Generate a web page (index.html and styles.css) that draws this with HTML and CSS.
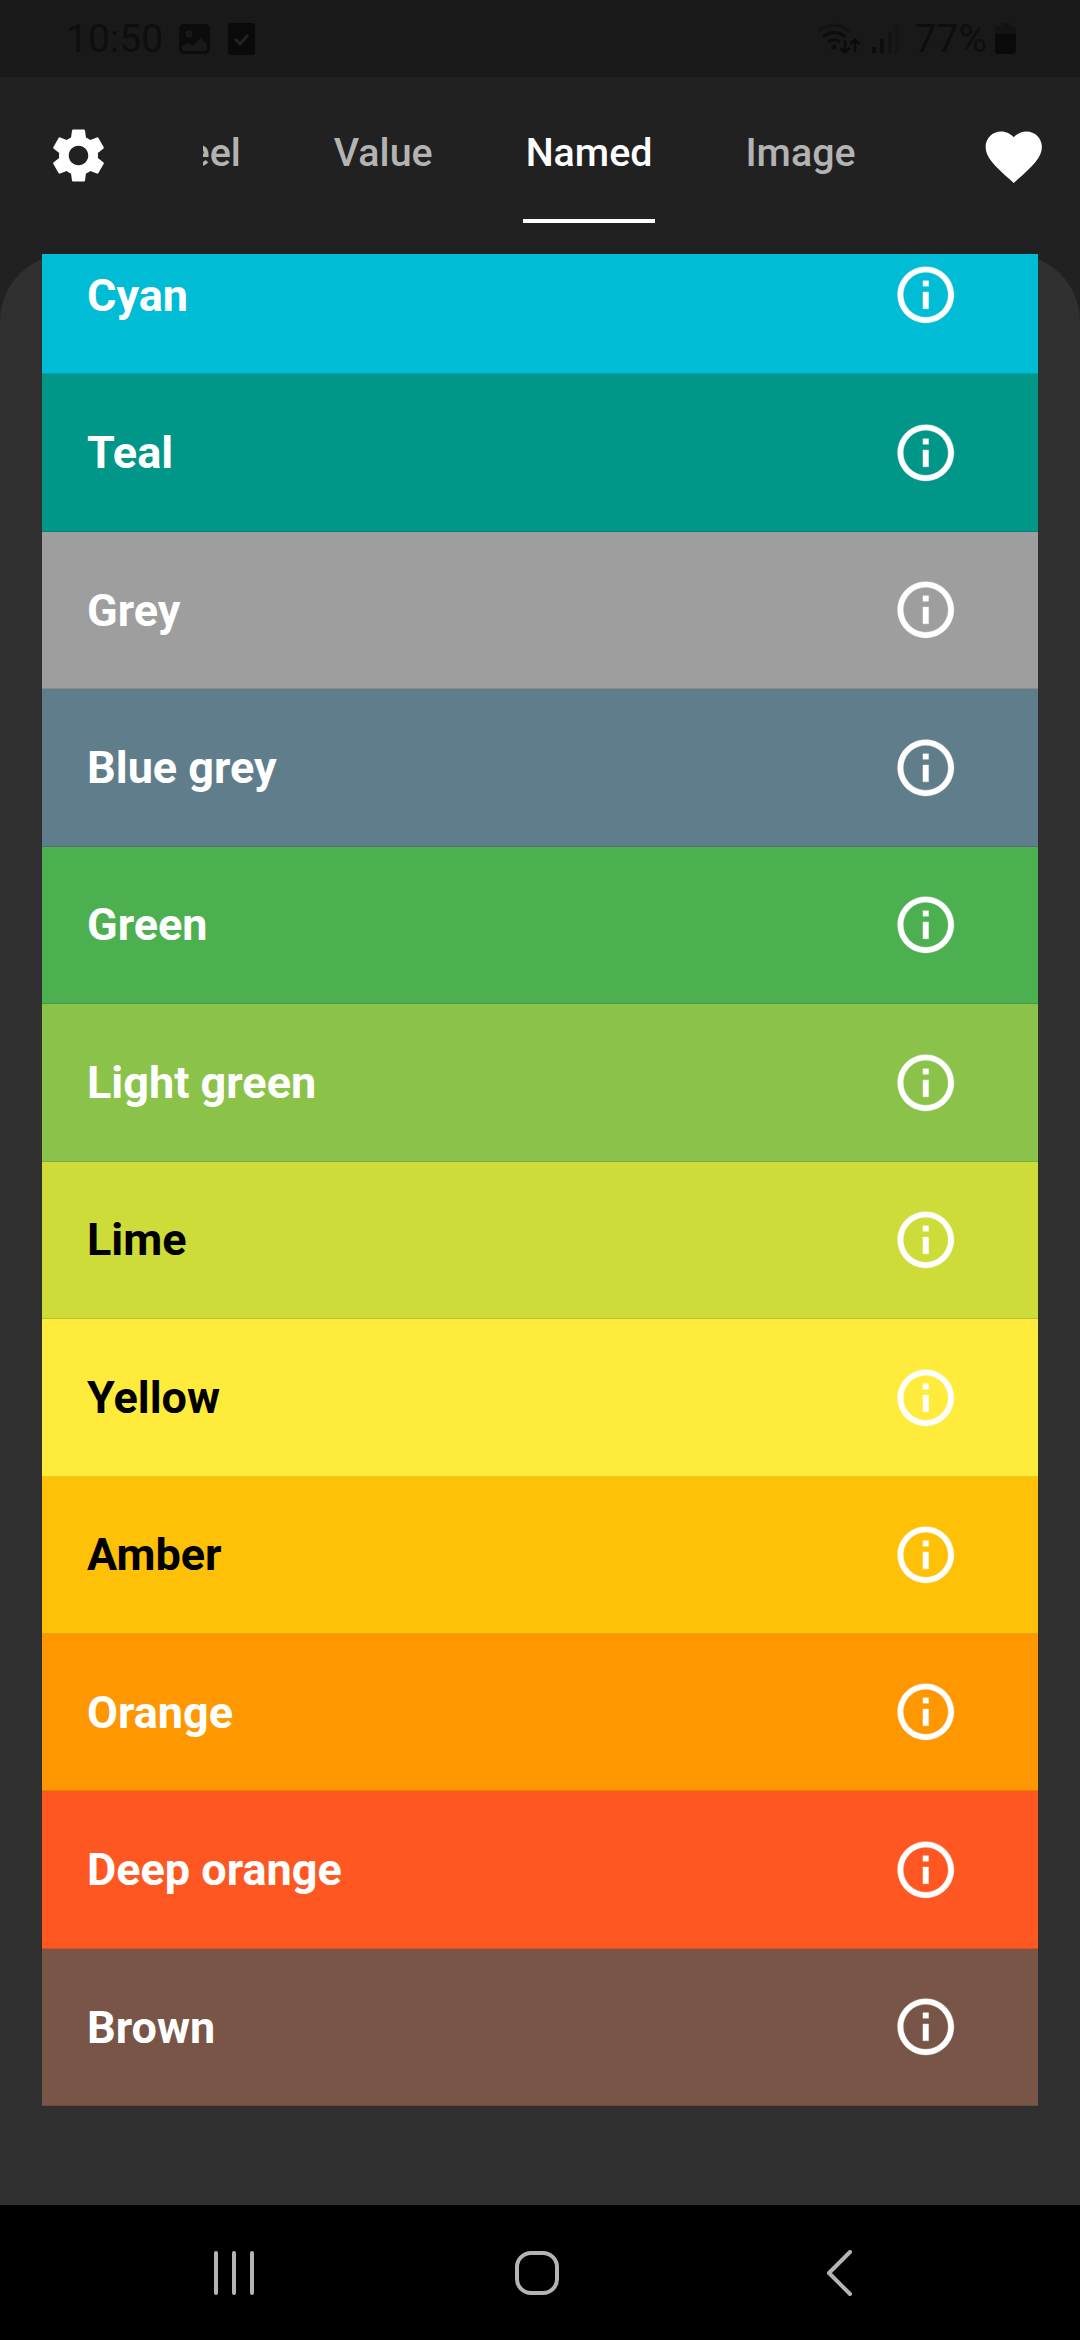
FILE: index.html
```html
<!DOCTYPE html>
<html lang="en">
<head>
    <meta charset="UTF-8">
    <meta name="viewport" content="width=device-width, initial-scale=1.0">
    <title>Named colors</title>
    <link rel="stylesheet" href="styles.css">
</head>
<body>
    <div class="page">
        <div class="status-bar">
            <div class="status-group">
                <span class="status-time">10:50</span>
                <svg class="status-image" viewBox="0 0 31 30">
                    <path fill="#0c0c0c" fill-rule="evenodd" d="M5 0h21a5 5 0 0 1 5 5v20a5 5 0 0 1-5 5H5a5 5 0 0 1-5-5V5a5 5 0 0 1 5-5zM10 6.500a3.500 3.500 0 1 0 0 7 3.500 3.500 0 0 0 0-7zM3 22v3a2 2 0 0 0 2 2h21a2 2 0 0 0 2-2v-5l-6-6-8 8-4-3z"/>
                </svg>
                <svg class="status-check" viewBox="0 0 27 32">
                    <rect width="27" height="32" rx="3" fill="#0a0a0a"/>
                    <path d="M7 16l5 5 8-9" fill="none" stroke="#222" stroke-width="3"/>
                </svg>
            </div>
            <div class="status-group">
                <svg class="status-wifi" viewBox="0 0 45 31">
                    <g fill="none" stroke-width="3">
                        <path d="M1 9C10 0 24 0 33 9" stroke="#131313"/>
                        <path d="M6 14c6-6 16-6 22 0" stroke="#0c0c0c"/>
                        <path d="M11 19c3.500-3 8.500-3 12 0" stroke="#0c0c0c"/>
                    </g>
                    <circle cx="17" cy="24" r="2.500" fill="#0c0c0c"/>
                    <path d="M28 17v12M23.500 25l4.500 4.500 4.500-4.500M38 29V17M33.500 21l4.500-4.500 4.500 4.500" fill="none" stroke="#0c0c0c" stroke-width="2.500"/>
                </svg>
                <svg class="status-signal" viewBox="0 0 27 29">
                    <rect x="0" y="23" width="4" height="6" fill="#0c0c0c"/>
                    <rect x="8" y="15" width="4" height="14" fill="#0e0e0e"/>
                    <rect x="16" y="8" width="4" height="21" fill="#131313"/>
                    <rect x="23" y="0" width="4" height="29" fill="#151515"/>
                </svg>
                <span class="status-battery-text">77%</span>
                <svg class="status-battery" viewBox="0 0 21 31">
                    <path d="M7 0h7v3h3a4 4 0 0 1 4 4v20a4 4 0 0 1-4 4H4a4 4 0 0 1-4-4V7a4 4 0 0 1 4-4h3z" fill="#131313"/>
                    <path d="M0 11h21v16a4 4 0 0 1-4 4H4a4 4 0 0 1-4-4z" fill="#0a0a0a"/>
                </svg>
            </div>
        </div>

        <div class="app-bar">
            <svg class="icon-settings" viewBox="0 0 24 24">
                <path fill="#fff" d="M19.140 12.940c.04-.3.06-.61.06-.94 0-.32-.02-.64-.07-.94l2.030-1.580c.18-.14.23-.41.12-.61l-1.920-3.320c-.12-.22-.37-.29-.59-.22l-2.390.96c-.5-.38-1.030-.7-1.620-.94l-.36-2.540c-.04-.24-.24-.41-.48-.41h-3.840c-.24 0-.43.17-.47.41l-.36 2.540c-.59.24-1.130.57-1.620.94l-2.390-.96c-.22-.08-.47 0-.59.22L2.740 8.870c-.12.21-.08.47.12.61l2.030 1.580c-.05.3-.09.63-.09.94s.02.64.07.94l-2.030 1.580c-.18.14-.23.41-.12.61l1.920 3.320c.12.22.37.29.59.22l2.390-.96c.5.38 1.030.7 1.620.94l.36 2.540c.05.24.24.41.48.41h3.840c.24 0 .44-.17.47-.41l.36-2.540c.59-.24 1.130-.56 1.620-.94l2.390.96c.22.08.47 0 .59-.22l1.920-3.320c.12-.22.07-.47-.12-.61l-2.010-1.580zM12 15.600c-1.980 0-3.600-1.620-3.600-3.600s1.620-3.600 3.600-3.600 3.600 1.620 3.600 3.600-1.620 3.600-3.600 3.600z"/>
            </svg>
            <div class="tabs">
                <div class="tabs-track">
                    <span class="tab">Wheel</span>
                    <span class="tab">Value</span>
                    <span class="tab tab-active">Named</span>
                    <span class="tab">Image</span>
                </div>
            </div>
            <svg class="icon-heart" viewBox="0 0 24 24">
                <path fill="#fff" d="M12 21.350l-1.450-1.320C5.400 15.360 2 12.280 2 8.500 2 5.420 4.420 3 7.500 3c1.740 0 3.410.81 4.500 2.090C13.090 3.810 14.760 3 16.500 3 19.580 3 22 5.420 22 8.500c0 3.780-3.400 6.860-8.550 11.540L12 21.350z"/>
            </svg>
        </div>

        <div class="panel">
            <div class="color-list">
                <div class="color-row cyan"><span>Cyan</span><svg class="icon-info" viewBox="0 0 24 24"><use href="#info"/></svg></div>
                <div class="color-row teal"><span>Teal</span><svg class="icon-info" viewBox="0 0 24 24"><use href="#info"/></svg></div>
                <div class="color-row grey"><span>Grey</span><svg class="icon-info" viewBox="0 0 24 24"><use href="#info"/></svg></div>
                <div class="color-row blue-grey"><span>Blue grey</span><svg class="icon-info" viewBox="0 0 24 24"><use href="#info"/></svg></div>
                <div class="color-row green"><span>Green</span><svg class="icon-info" viewBox="0 0 24 24"><use href="#info"/></svg></div>
                <div class="color-row light-green"><span>Light green</span><svg class="icon-info" viewBox="0 0 24 24"><use href="#info"/></svg></div>
                <div class="color-row lime dark-text"><span>Lime</span><svg class="icon-info" viewBox="0 0 24 24"><use href="#info"/></svg></div>
                <div class="color-row yellow dark-text"><span>Yellow</span><svg class="icon-info" viewBox="0 0 24 24"><use href="#info"/></svg></div>
                <div class="color-row amber dark-text"><span>Amber</span><svg class="icon-info" viewBox="0 0 24 24"><use href="#info"/></svg></div>
                <div class="color-row orange"><span>Orange</span><svg class="icon-info" viewBox="0 0 24 24"><use href="#info"/></svg></div>
                <div class="color-row deep-orange"><span>Deep orange</span><svg class="icon-info" viewBox="0 0 24 24"><use href="#info"/></svg></div>
                <div class="color-row brown"><span>Brown</span><svg class="icon-info" viewBox="0 0 24 24"><use href="#info"/></svg></div>
            </div>
        </div>

        <div class="nav-bar">
            <svg class="nav-icon" viewBox="0 0 60 46">
                <path d="M12 3v40M30 3v40M48 3v40" fill="none" stroke="#b4b4b4" stroke-width="4" stroke-linecap="round"/>
            </svg>
            <svg class="nav-icon" viewBox="0 0 60 46">
                <rect x="10" y="3" width="40" height="40" rx="14" fill="none" stroke="#b4b4b4" stroke-width="4"/>
            </svg>
            <svg class="nav-icon" viewBox="0 0 60 46">
                <path d="M41 2L20 23L41 44" fill="none" stroke="#b4b4b4" stroke-width="4" stroke-linecap="round" stroke-linejoin="round"/>
            </svg>
        </div>
    </div>

    <svg class="icon-defs" width="0" height="0">
        <symbol id="info" viewBox="0 0 24 24">
            <path fill="#fff" stroke="#fff" stroke-width="0.12" d="M11 7h2v2h-2zm0 4h2v6h-2zm1-9C6.480 2 2 6.480 2 12s4.480 10 10 10 10-4.480 10-10S17.520 2 12 2zm0 18c-4.410 0-8-3.590-8-8s3.590-8 8-8 8 3.590 8 8-3.590 8-8 8z"/>
        </symbol>
    </svg>
</body>
</html>
```

FILE: styles.css
```css
/* page frame */
html, body {
    margin: 0;
    padding: 0;
}

body {
    font-family: Roboto, sans-serif;
    background-color: #212121;
}

.page {
    display: flex;
    flex-direction: column;
    width: 1080px;
    height: 2340px;
    overflow: hidden;
}

.icon-defs {
    display: block;
    height: 0;
}

/* status bar */
.status-bar {
    display: flex;
    justify-content: space-between;
    align-items: center;
    flex: none;
    box-sizing: border-box;
    height: 77px;
    padding: 8px 64px 8px 66px;
    background-color: #191919;
    color: #0e0e0e;
}

.status-group {
    display: flex;
    align-items: center;
}

.status-time,
.status-battery-text {
    font-size: 39px;
    line-height: 46px;
}

.status-image {
    width: 31px;
    height: 30px;
    margin-left: 16px;
}

.status-check {
    width: 27px;
    height: 32px;
    margin-left: 18px;
}

.status-wifi {
    width: 45px;
    height: 31px;
}

.status-signal {
    width: 27px;
    height: 29px;
    margin-left: 10px;
}

.status-battery-text {
    margin-left: 16px;
}

.status-battery {
    width: 21px;
    height: 31px;
    margin-left: 8px;
}

/* top app bar */
.app-bar {
    display: flex;
    align-items: flex-start;
    flex: none;
    box-sizing: border-box;
    height: 177px;
    padding: 46px 33px 0 46px;
    background-color: #212121;
}

.icon-settings {
    flex: none;
    width: 65px;
    height: 65px;
}

.icon-heart {
    flex: none;
    width: 67.5px;
    height: 67.5px;
}

.tabs {
    flex: 1;
    margin: 7px 0 0 92px;
    overflow: hidden;
}

.tabs-track {
    display: flex;
    gap: 88px;
    margin-left: -73.5px;
}

.tab {
    padding: 0 2.5px 43px;
    border-bottom: 4px solid transparent;
    font-size: 39.4px;
    font-weight: 500;
    line-height: 46px;
    color: #b3b3b3;
}

.tab-active {
    border-bottom-color: #fff;
    color: #fff;
}

/* color list */
.panel {
    flex: 1;
    min-height: 0;
    padding: 0 42px;
    border-radius: 67.5px 67.5px 0 0;
    background-color: #303030;
}

.color-list {
    height: 1852px;
    overflow: hidden;
}

.color-row {
    display: flex;
    justify-content: space-between;
    align-items: center;
    box-sizing: border-box;
    height: 157.45px;
    padding: 0 79px 0 45px;
    border-bottom: 1px solid rgba(0, 0, 0, 0.12);
    font-size: 45px;
    font-weight: 700;
    color: #fff;
}

.color-row:first-child {
    margin-top: -37px;
}

.dark-text {
    color: #000;
}

.icon-info {
    width: 67.5px;
    height: 67.5px;
}

.cyan { background-color: #00bcd4; }
.teal { background-color: #009688; }
.grey { background-color: #9e9e9e; }
.blue-grey { background-color: #607d8b; }
.green { background-color: #4caf50; }
.light-green { background-color: #8bc34a; }
.lime { background-color: #cddc39; }
.yellow { background-color: #ffeb3b; }
.amber { background-color: #ffc107; }
.orange { background-color: #ff9800; }
.deep-orange { background-color: #ff5722; }
.brown { background-color: #795548; }

/* system navigation */
.nav-bar {
    display: flex;
    align-items: center;
    gap: 242.5px;
    flex: none;
    box-sizing: border-box;
    height: 135px;
    padding-left: 204px;
    background-color: #000;
}

.nav-icon {
    flex: none;
    width: 60px;
    height: 46px;
}
```
